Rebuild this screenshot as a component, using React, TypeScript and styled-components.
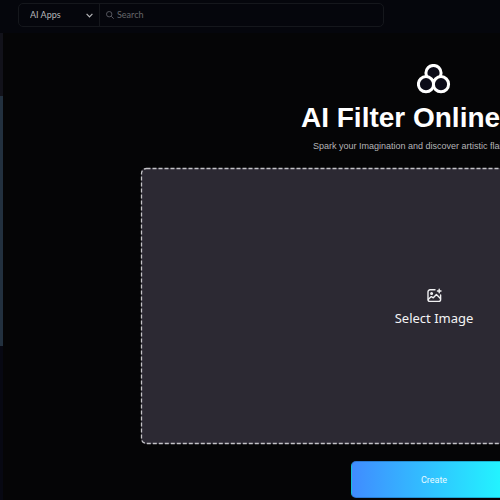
import React from "react";
import styled, { createGlobalStyle } from "styled-components";

const GlobalStyle = createGlobalStyle`
  * { box-sizing: border-box; }
  body {
    margin: 0;
    background: #050506;
    color: #fff;
    font-family: "Liberation Sans", Arial, sans-serif;
    overflow: hidden;
  }
`;

const Page = styled.div`
  display: flex;
  flex-direction: column;
  min-height: 100vh;
  overflow: hidden;
`;

const TopBar = styled.header`
  display: flex;
  height: 33px;
  padding: 3px 116px 6px 18px;
  background: #05060c;
`;

const SearchGroup = styled.form`
  display: flex;
  flex: 1;
  max-width: 366px;
  border: 1px solid #15171c;
  border-radius: 5px;
`;

const AppPicker = styled.label`
  display: flex;
  align-items: center;
  width: 81px;
  padding: 0 6px 0 11px;
  border-right: 1px solid #15171c;
`;

const AppSelect = styled.select`
  appearance: none;
  flex: 1;
  min-width: 0;
  padding: 0;
  border: 0;
  outline: 0;
  background: transparent;
  color: #b6b7ba;
  font: 9px/12px Lato, sans-serif;
`;

const SearchField = styled.label`
  display: flex;
  align-items: center;
  flex: 1;
  gap: 3px;
  padding: 0 6px;
`;

const SearchInput = styled.input`
  flex: 1;
  min-width: 0;
  padding: 0;
  border: 0;
  outline: 0;
  background: transparent;
  color: #b6b7ba;
  font: 9px/12px Lato, sans-serif;
  &::placeholder { color: #65666a; opacity: 1; }
`;

const Body = styled.div`
  display: flex;
  flex: 1;
`;

const Rail = styled.div`
  display: flex;
  flex-direction: column;
  flex: none;
  width: 3px;
  background: #070812;
`;

const RailPart = styled.div<{ $height: number; $color: string }>`
  height: ${(p) => p.$height}px;
  background: ${(p) => p.$color};
`;

const Workspace = styled.main`
  display: flex;
  flex-direction: column;
  align-items: center;
  flex: 1 0 auto;
  min-width: 862px;
  padding-top: 31px;
`;

const Intro = styled.section`
  display: flex;
  flex-direction: column;
  align-items: center;
  white-space: nowrap;
`;

const Title = styled.h1`
  margin: 6px 0 0;
  font-size: 28px;
  line-height: 36px;
  font-weight: 700;
`;

const Tagline = styled.p`
  width: 242px;
  margin: 3px 0 0;
  color: #b5b5b7;
  font-size: 9px;
  line-height: 14px;
`;

const DropZone = styled.button`
  display: flex;
  flex-direction: column;
  align-items: center;
  justify-content: center;
  gap: 5px;
  width: 100%;
  max-width: 586px;
  height: 276px;
  margin: 15px 0 17px;
  padding: 4px 0 0;
  position: relative;
  border: 0;
  border-radius: 5px;
  background: #2c2933;
  color: #f4f4f5;
  font: 13px/20px "Noto Sans", sans-serif;
`;

const DashOutline = styled.svg`
  position: absolute;
  inset: 0;
  width: 100%;
  height: 100%;
  overflow: visible;
`;

const CreateButton = styled.button`
  width: 166px;
  height: 37px;
  padding: 0;
  border: 1px solid rgba(0, 60, 110, 0.3);
  border-radius: 5px;
  background: linear-gradient(90deg, #408cff 0%, #22f5ff 92%);
  color: #e6faff;
  font: 9px/12px Roboto, sans-serif;
`;

function Chevron() {
  return (
    <svg width="7" height="5" viewBox="0 0 7 5" fill="none" stroke="#b6b7ba" strokeWidth="1.2" aria-hidden="true">
      <path d="M.6.8 3.5 3.8 6.4.8" />
    </svg>
  );
}

function Magnifier() {
  return (
    <svg width="8" height="8" viewBox="0 0 8 8" fill="none" stroke="#56575f" strokeWidth="1" aria-hidden="true">
      <circle cx="3.2" cy="3.2" r="2.7" />
      <path d="m5.2 5.2 2.5 2.5" />
    </svg>
  );
}

function FilterMark() {
  return (
    <svg width="34" height="30" viewBox="0 0 34 30" fill="#0b0b18" stroke="#fff" strokeWidth="3" aria-hidden="true">
      <circle cx="16.5" cy="9" r="7.6" />
      <circle cx="9" cy="20.2" r="7.6" />
      <circle cx="24" cy="20.2" r="7.6" />
    </svg>
  );
}

function ImagePlus() {
  return (
    <svg width="16" height="15" viewBox="0 0 16 15" fill="none" stroke="#f0f0f2" strokeWidth="1.4" strokeLinecap="round" strokeLinejoin="round" aria-hidden="true">
      <path d="M9 1.8H4a2 2 0 0 0-2 2v7.6a2 2 0 0 0 2 2h8.6a2 2 0 0 0 2-2V7" />
      <circle cx="5.6" cy="5.4" r=".8" />
      <path d="m2.4 11.2 2.9-2.6 2 1.2 3.1-3.2 4 4" />
      <path d="M13.2 1.2v3.6M11.4 3H15" />
    </svg>
  );
}

export default function App() {
  return (
    <>
      <GlobalStyle />
      <Page>
        <TopBar>
          <SearchGroup role="search">
            <AppPicker>
              <AppSelect aria-label="Category" defaultValue="apps">
                <option value="apps">AI Apps</option>
              </AppSelect>
              <Chevron />
            </AppPicker>
            <SearchField>
              <Magnifier />
              <SearchInput type="text" placeholder="Search" aria-label="Search" />
            </SearchField>
          </SearchGroup>
        </TopBar>
        <Body>
          <Rail>
            <RailPart $height={63} $color="#12121a" />
            <RailPart $height={250} $color="#22303e" />
          </Rail>
          <Workspace>
            <Intro>
              <FilterMark />
              <Title>AI Filter Online Free</Title>
              <Tagline>Spark your Imagination and discover artistic flair</Tagline>
            </Intro>
            <DropZone type="button">
              <DashOutline aria-hidden="true">
                <rect x=".5" y=".5" width="100%" height="275" rx="5" fill="none" stroke="#c4c3c7" strokeWidth="1.3" strokeDasharray="4 2" />
              </DashOutline>
              <ImagePlus />
              <span>Select Image</span>
            </DropZone>
            <CreateButton type="button">Create</CreateButton>
          </Workspace>
        </Body>
      </Page>
    </>
  );
}
